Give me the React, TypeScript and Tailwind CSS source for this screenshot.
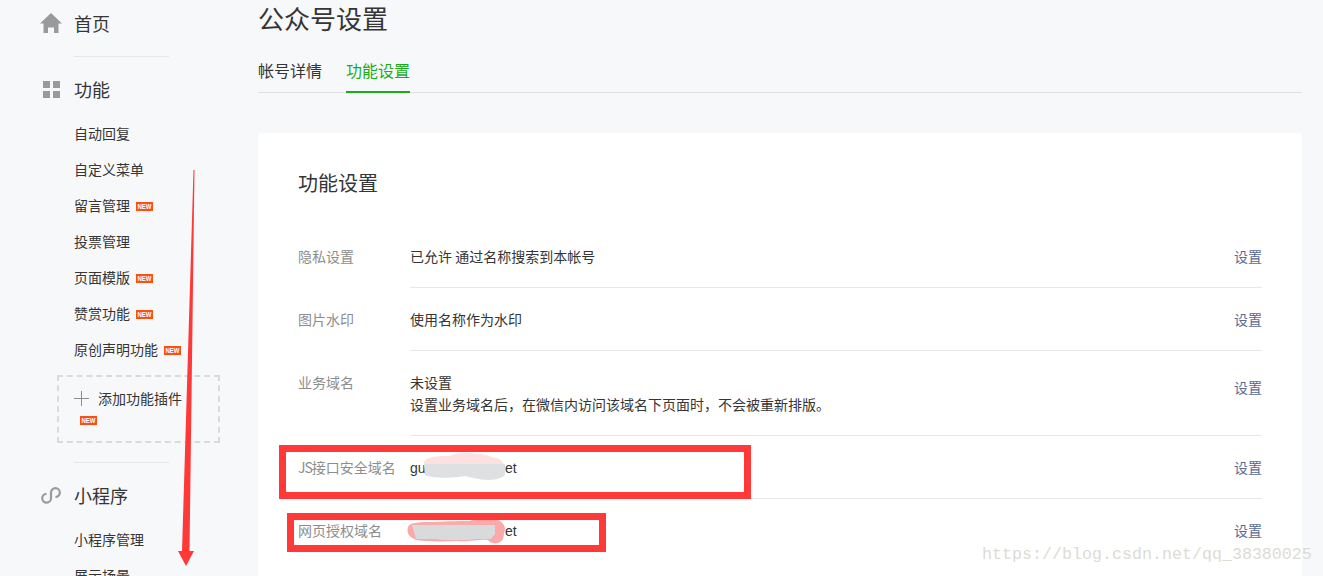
const cjk = "font-['Microsoft_YaHei','Noto_Sans_CJK_SC',sans-serif]"

function NewBadge({ className = "" }: { className?: string }) {
  return (
    <span className={`ml-1.5 inline-flex h-[9px] w-[17px] items-center justify-center bg-[#fa5014] font-['Liberation_Sans',sans-serif] text-[6px] leading-[9px] font-bold text-white ${className}`}>
      <span className="inline-block scale-y-[1.35]">NEW</span>
    </span>
  )
}

function NavItem({ label, isNew }: { label: string; isNew?: boolean }) {
  return (
    <li className="flex h-9 items-center pl-[74px] text-sm text-[#353535]">
      <span>{label}</span>
      {isNew && <NewBadge className="mt-[3px]" />}
    </li>
  )
}

function NavHeading({ icon, label }: { icon: React.ReactNode; label: string }) {
  return (
    <div className="flex h-8 items-center text-lg text-[#353535]">
      <span className="flex w-[74px] justify-end pr-3">{icon}</span>
      {label}
    </div>
  )
}

function Divider() {
  return <div className="ml-[74px] h-px w-[95px] bg-[#e7e7eb]" />
}

function Row({ label, action, children, last }: { label: React.ReactNode; action?: string; children: React.ReactNode; last?: boolean }) {
  return (
    <div className="flex text-sm leading-[22px]">
      <div className="w-[112px] pt-5 text-[#8d8d8d]">{label}</div>
      <div className={`flex flex-1 justify-between pt-5 pb-5 ${last ? "pb-[21px]" : "border-b border-[#e7e7eb]"}`}>
        <div className="text-[#353535]">{children}</div>
        <a className={`text-[#576b95] ${action ?? ""}`}>设置</a>
      </div>
    </div>
  )
}

export default function App() {
  return (
    <div className={`relative flex h-[576px] w-[1323px] overflow-hidden bg-[#f7f8fa] ${cjk}`}>
      <aside className="w-[258px] shrink-0">
        <div className="pt-[7px]">
          <NavHeading
            label="首页"
            icon={
              <svg width="22" height="20" viewBox="0 0 22 20" fill="#9a9a9a">
                <path d="M11 0 22 10.5 18.5 10.5V20H14V14.5H8V20H3.5V10.5H0Z" />
              </svg>
            }
          />
        </div>
        <div className="pt-[17px] pb-4">
          <Divider />
        </div>
        <NavHeading
          label="功能"
          icon={
            <svg width="17" height="17" viewBox="0 0 17 17" className="mr-0.5" fill="#9a9a9a">
              <rect width="7" height="7" />
              <rect x="10" width="7" height="7" />
              <rect y="10" width="7" height="7" />
              <rect x="10" y="10" width="7" height="7" />
            </svg>
          }
        />
        <ul className="pt-2.5">
          <NavItem label="自动回复" />
          <NavItem label="自定义菜单" />
          <NavItem label="留言管理" isNew />
          <NavItem label="投票管理" />
          <NavItem label="页面模版" isNew />
          <NavItem label="赞赏功能" isNew />
          <NavItem label="原创声明功能" isNew />
        </ul>
        <div className="mt-2 ml-[57px] h-[68px] w-[163px] border-2 border-dashed border-[#d9dadc] pt-[11px] pl-[15px] text-sm text-[#353535]">
          <div className="flex h-5 items-center">
            <svg width="15" height="15" viewBox="0 0 15 15" stroke="#8d8d8d" className="mr-[9px]">
              <path d="M7.5 0v15M0 7.5h15" />
            </svg>
            添加功能插件
          </div>
          <div className="mt-2 flex h-[9px]">
            <NewBadge />
          </div>
        </div>
        <div className="pt-[19px] pb-4">
          <Divider />
        </div>
        <NavHeading
          label="小程序"
          icon={
            <svg width="20" height="17" viewBox="0 0 20 17" fill="none" stroke="#9a9a9a" strokeWidth="2.2" className="mr-px">
              <path d="M5.5 6.8A4.4 4.4 0 1 0 10 11.2V5.6A4.4 4.4 0 1 1 14.4 10" />
            </svg>
          }
        />
        <ul className="pt-2.5">
          <NavItem label="小程序管理" />
          <NavItem label="展示场景" />
        </ul>
      </aside>

      <main className="flex-1 pr-[21px]">
        <h1 className="text-[26px] leading-9 font-normal text-[#353535]">公众号设置</h1>
        <div className="mt-[19px] flex h-[38px] gap-6 border-b border-[#dfdfe3] text-base">
          <span className="pt-[3px] text-[#353535]">帐号详情</span>
          <span className="h-[38px] border-b-2 border-[#1aad19] pt-[3px] text-[#1aad19]">功能设置</span>
        </div>
        <section className="mt-10 rounded-sm bg-white px-10 pt-[30px] pb-10">
          <h2 className="h-[62px] text-xl leading-10 font-normal text-[#353535]">功能设置</h2>
          <Row label="隐私设置">已允许 通过名称搜索到本帐号</Row>
          <Row label="图片水印">使用名称作为水印</Row>
          <Row label="业务域名" action="pt-[5px]">
            未设置
            <br />
            设置业务域名后，在微信内访问该域名下页面时，不会被重新排版。
          </Row>
          <Row
            label={
              <>
                <span className="tracking-[-1px]">JS</span>接口安全域名
              </>
            }
          >
            <div className="flex h-[22px] pt-px font-['Liberation_Sans',sans-serif]">
              <span className="w-[95px]">gu</span>
              <span>et</span>
            </div>
          </Row>
          <Row label="网页授权域名" last>
            <div className="flex h-[22px] pt-px font-['Liberation_Sans',sans-serif]">
              <span className="w-[95px]" />
              <span>et</span>
            </div>
          </Row>
        </section>
      </main>

      {/* annotations pasted over the screenshot */}
      <svg width="1323" height="576" className="pointer-events-none absolute inset-0">
        <path d="M424 462c2-6 18-6 26-6 6-4 20-4 26-2 6-1 14 3 20 4 6 1 8 6 9 10l-80 0z" fill="#fde0e0" />
        <path d="M424 464h81v10c-2 6-18 7-26 5-6-1-10-2-14-3-10 2-30 3-40-1z" fill="#dfe0e1" />
        <path d="M408 527c2-5 12-5 26-5 14-1 30-1 36-1 8-4 24-3 30 0 3 2 5 5 5 8l-2 10c-2 5-12 6-15 1-8-1-20 2-30 1-20 1-36 0-42-1-6-3-10-6-8-13z" fill="#fca9a9" />
        <path d="M412 525h83v9l-4 5h-15l-8 1h-24l-10-1h-18z" fill="#d9dadb" />
        <rect x="282.5" y="448.5" width="465" height="47" fill="none" stroke="#ff3838" strokeWidth="7" />
        <rect x="290.5" y="516.5" width="312" height="32" fill="none" stroke="#ff3838" strokeWidth="7" />
        <path d="M193.5 170 194.5 170 189.5 551 194 551 186 566 178 551 182 551Z" fill="#ff3838" />
      </svg>
      <div className="absolute top-[544px] left-[982px] font-['Liberation_Mono',monospace] text-[16.67px] leading-[22px] whitespace-nowrap text-[#dcdcd4]">
        https://blog.csdn.net/qq_38380025
      </div>
    </div>
  )
}
